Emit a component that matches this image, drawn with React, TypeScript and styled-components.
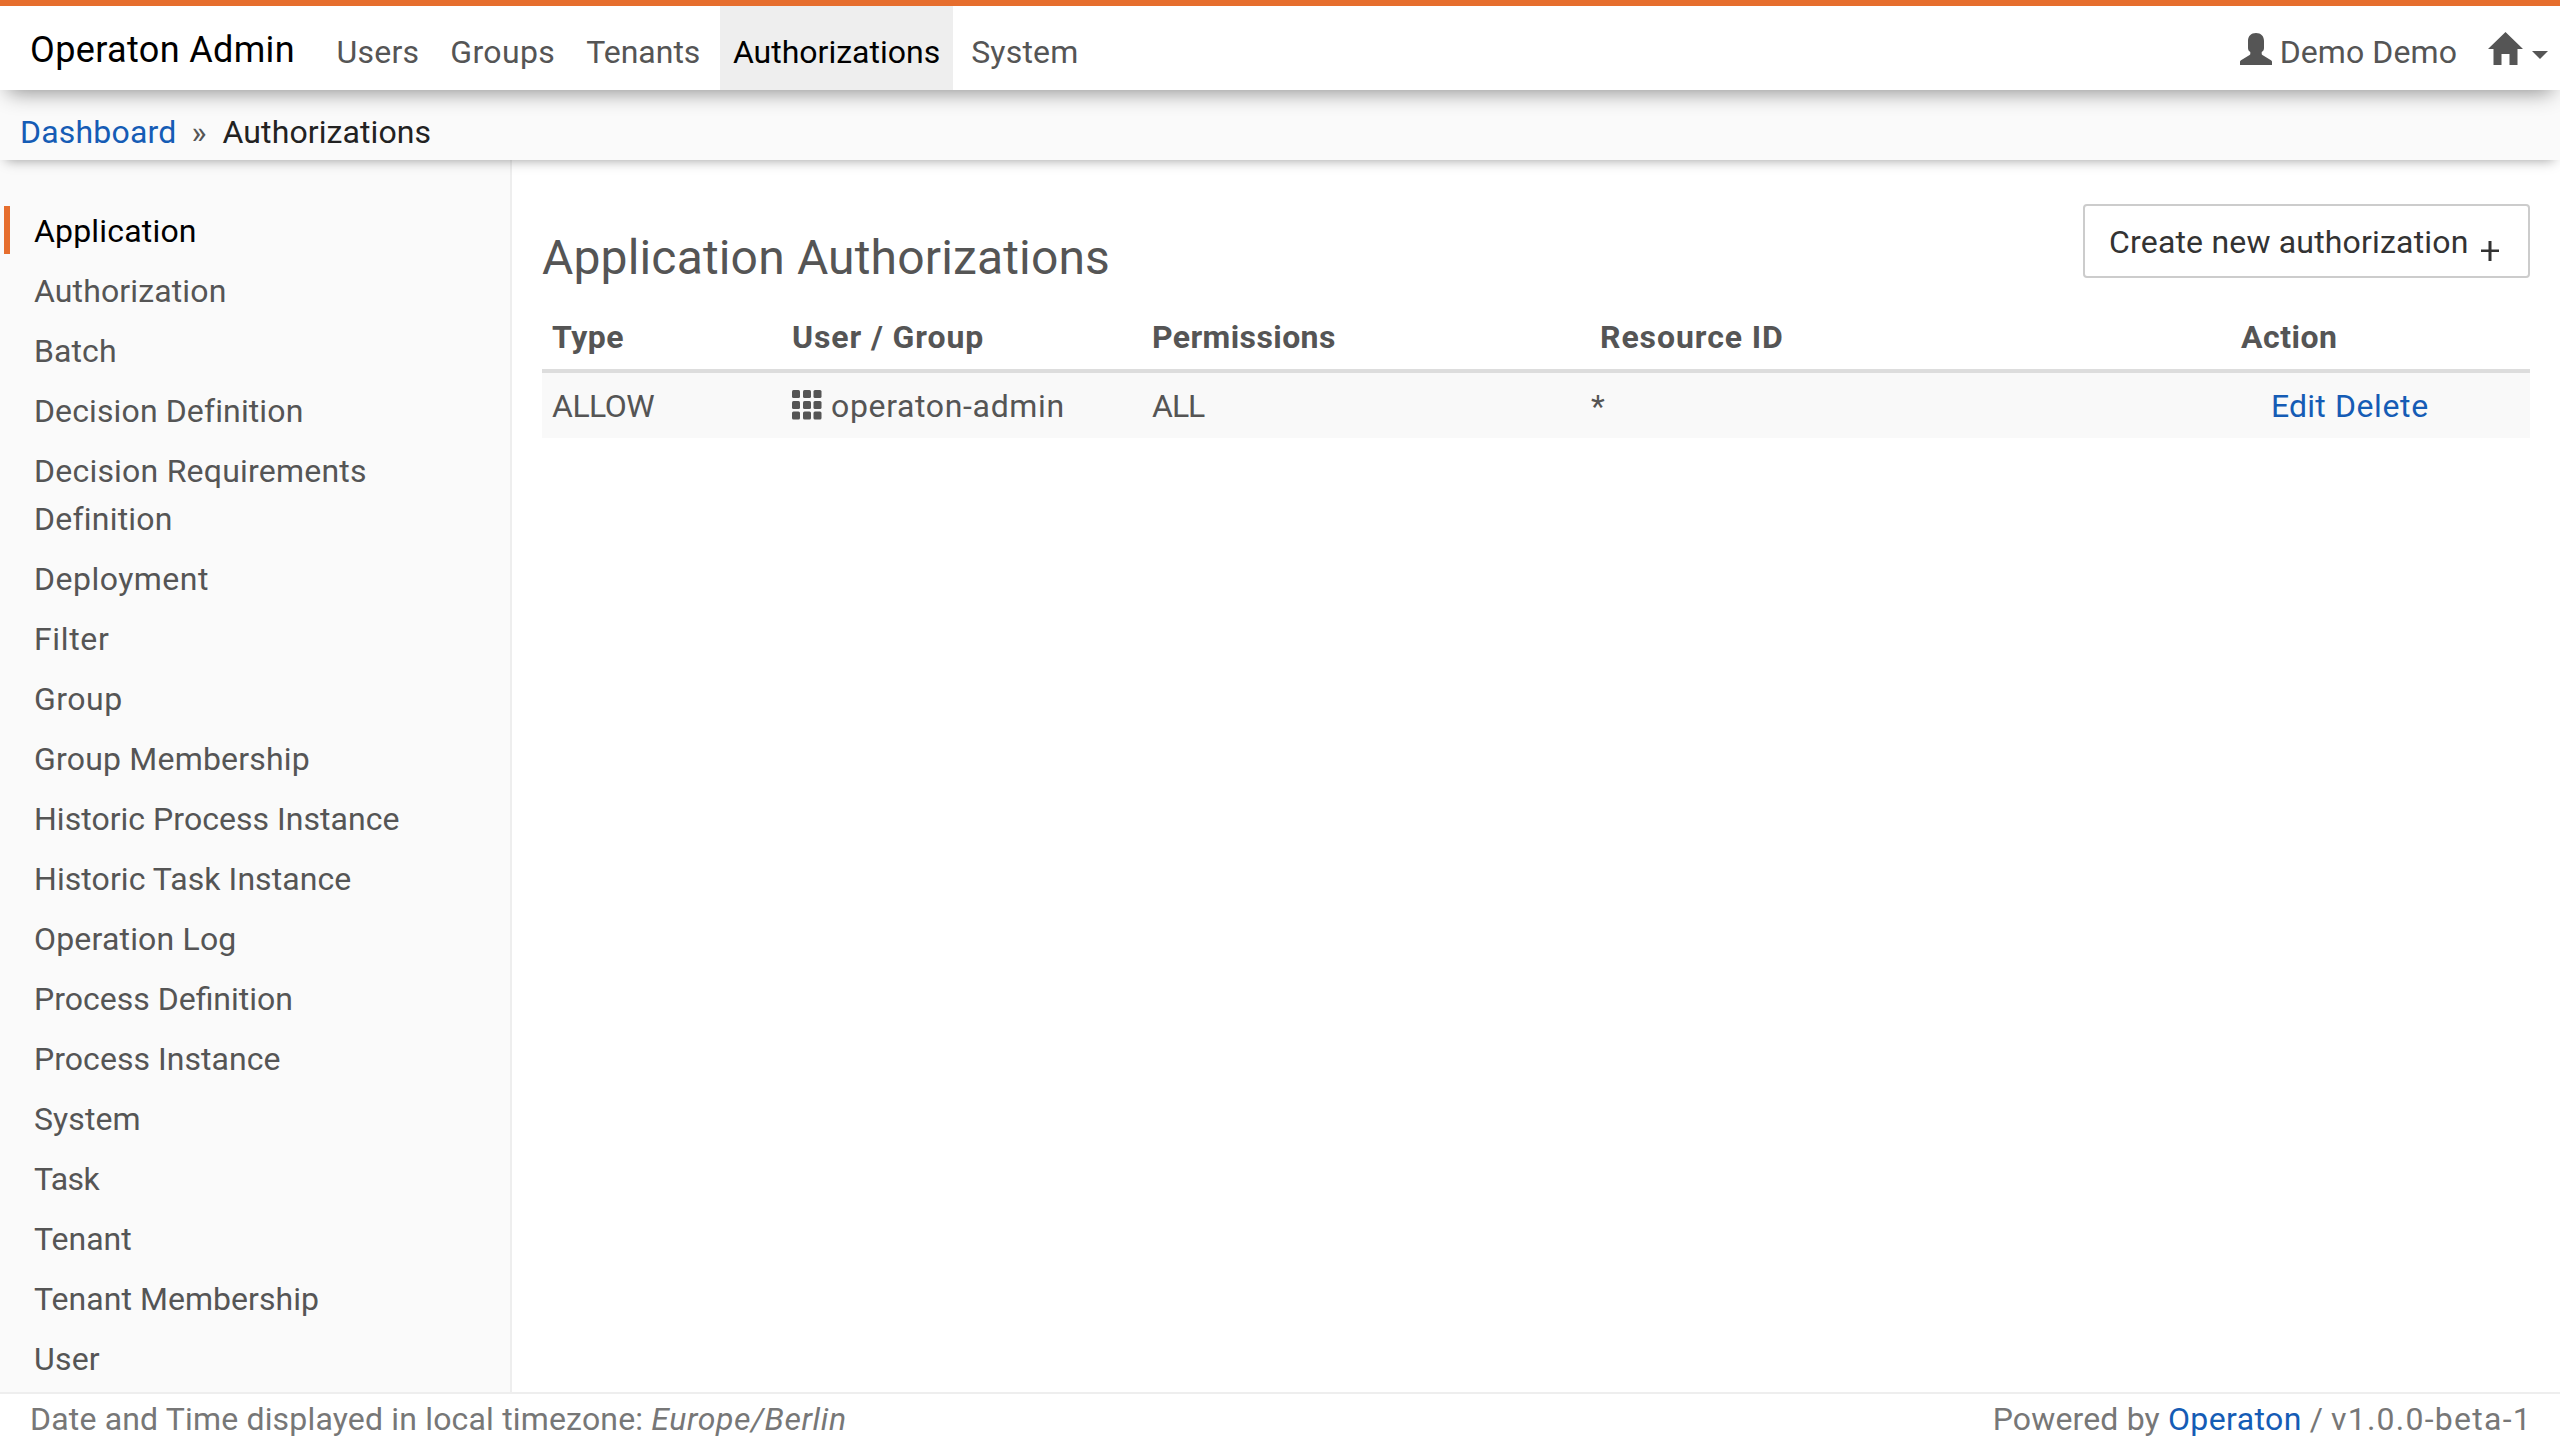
import React from 'react';
import styled, { createGlobalStyle } from 'styled-components';

const Global = createGlobalStyle`
  * { box-sizing: border-box; }
  body {
    margin: 0;
    background: #fff;
    color: #555;
    font: 32px/48px Roboto, "Liberation Sans", sans-serif;
    overflow: hidden;
  }
`;

const Page = styled.div`
  display: flex;
  flex-direction: column;
  width: 2560px;
  height: 1440px;
`;

const Label = styled.span<{ $ls?: number }>`
  letter-spacing: ${(p) => p.$ls ?? 0}px;
  white-space: nowrap;
`;

const Header = styled.header`
  position: relative;
  z-index: 2;
  display: flex;
  flex: none;
  height: 90px;
  border-top: 6px solid #e66e2e;
  background: #fff;
  box-shadow: 0 10px 20px -8px rgba(0, 0, 0, 0.45);
`;

const Brand = styled.div`
  width: 324px;
  padding: 20px 0 0 30px;
  color: #000;
  font-size: 36px;
`;

const Nav = styled.nav`
  display: flex;
  flex: 1;
  gap: 6px;
`;

const NavLink = styled.a<{ $active?: boolean }>`
  margin-left: ${(p) => (p.$active ? 1.5 : 0)}px;
  padding: 22px 12.5px 0 12.5px;
  background: ${(p) => (p.$active ? '#eee' : 'transparent')};
  color: ${(p) => (p.$active ? '#000' : '#555')};
`;

const Account = styled.div`
  display: flex;
  align-items: flex-start;
  padding: 22px 12px 0 0;
`;

const UserIcon = styled.svg`
  width: 32px;
  height: 32px;
  margin: 5px 8px 0 0;
  fill: #555;
`;

const HomeIcon = styled.svg`
  width: 35px;
  height: 33px;
  margin: 4px 9px 0 31px;
  fill: #555;
`;

const Caret = styled.svg`
  width: 16px;
  height: 8px;
  margin-top: 23px;
  fill: #555;
`;

const Breadcrumb = styled.div`
  position: relative;
  z-index: 1;
  display: flex;
  flex: none;
  height: 70px;
  padding: 18px 0 0 20px;
  background: #fafafa;
  color: #222;
  box-shadow: 0 6px 12px -6px rgba(0, 0, 0, 0.4);
`;

const Link = styled.a`
  color: #155cb5;
`;

const Divider = styled.span`
  width: 46px;
  padding-left: 15px;
  color: #555;
`;

const Body = styled.div`
  display: flex;
  flex: 1;
  min-height: 0;
`;

const Sidebar = styled.ul`
  flex: none;
  width: 512px;
  margin: 0;
  padding: 46px 60px 0 4px;
  border-right: 2px solid #eee;
  background: #fafafa;
  list-style: none;
`;

const SideItem = styled.li<{ $active?: boolean }>`
  position: relative;
  padding: 1px 0 11px 30px;
  color: ${(p) => (p.$active ? '#000' : '#555')};

  &::before {
    content: '';
    display: ${(p) => (p.$active ? 'block' : 'none')};
    position: absolute;
    left: 0;
    top: 0;
    width: 6px;
    height: 48px;
    background: #e66e2e;
  }
`;

const SideLabel = styled.span<{ $ls: number }>`
  letter-spacing: ${(p) => p.$ls}px;
`;

const Main = styled.main`
  flex: 1;
  padding: 44px 30px 0;
`;

const TitleRow = styled.div`
  display: flex;
  justify-content: space-between;
  align-items: flex-start;
  height: 109px;
`;

const Title = styled.h1`
  margin: 24px 0 0;
  font-size: 48px;
  font-weight: 400;
  line-height: 60px;
`;

const CreateButton = styled.button`
  display: flex;
  align-items: flex-start;
  width: 447px;
  height: 74px;
  padding: 12px 0 0 24px;
  border: 2px solid #ccc;
  border-radius: 4px;
  background: #fff;
  color: #333;
  font: inherit;
`;

const PlusIcon = styled.svg`
  width: 18px;
  height: 20px;
  margin: 23px 0 0 12px;
  fill: #333;
`;

const Row = styled.div`
  display: grid;
  grid-template-columns: 240px 360px 448px 641px 1fr;
`;

const HeadRow = styled(Row)`
  height: 60px;
  border-bottom: 4px solid #ddd;
  font-weight: 700;
`;

const DataRow = styled(Row)`
  height: 65px;
  padding-top: 9px;
  background: #f9f9f9;
`;

const Cell = styled.div<{ $pad?: number }>`
  display: flex;
  padding-left: ${(p) => p.$pad ?? 10}px;
`;

const GroupIcon = styled.svg`
  width: 30px;
  height: 30px;
  margin: 8px 9px 0 0;
  fill: #555;
`;

const Actions = styled(Cell)`
  gap: 9px;
`;

const Footer = styled.footer`
  display: flex;
  flex: none;
  justify-content: space-between;
  height: 48px;
  padding: 2px 28px 0 30px;
  border-top: 2px solid #eee;
  background: #fff;
  color: #777;
  line-height: 46px;
`;

const FooterText = styled.div`
  display: flex;
  gap: 8px;
`;

const navItems: [string, number][] = [
  ['Users', 0.23],
  ['Groups', 0.36],
  ['Tenants', 0],
  ['Authorizations', 0],
  ['System', 0.2],
];

const resources: [string, number][] = [
  ['Application', 0.18],
  ['Authorization', 0.13],
  ['Batch', 0.1],
  ['Decision Definition', 0.12],
  ['Decision Requirements Definition', 0.22],
  ['Deployment', 0.49],
  ['Filter', 0.66],
  ['Group', 0.5],
  ['Group Membership', 0.2],
  ['Historic Process Instance', 0.03],
  ['Historic Task Instance', 0.07],
  ['Operation Log', 0.18],
  ['Process Definition', 0],
  ['Process Instance', 0.04],
  ['System', 0.1],
  ['Task', -0.6],
  ['Tenant', 0],
  ['Tenant Membership', 0.04],
  ['User', 0.2],
];

const dots = [0, 11, 21.5];

export default function App() {
  return (
    <Page>
      <Global />
      <Header>
        <Brand>
          <Label $ls={0.36}>Operaton Admin</Label>
        </Brand>
        <Nav>
          {navItems.map(([name, ls]) => (
            <NavLink key={name} $active={name === 'Authorizations'}>
              <Label $ls={ls}>{name}</Label>
            </NavLink>
          ))}
        </Nav>
        <Account>
          <UserIcon viewBox="0 0 32 32">
            <path d="M16 0c5 0 8 3.2 8 8v7c0 2-.8 3.3-2.3 4v2c0 .5.2.8.7 1.1L31 27.2c.7.4 1 .8 1 1.5V32H0v-3.3c0-.7.3-1.1 1-1.5l8.6-5.1c.5-.3.7-.6.7-1.1v-2C8.8 18.3 8 17 8 15V8c0-4.8 3-8 8-8z" />
          </UserIcon>
          <Label $ls={0.09}>Demo Demo</Label>
          <HomeIcon viewBox="0 0 35 33">
            <path d="M17.5 0 35 17h-5.5v16h-8V22h-8v11h-8V17H0z" />
          </HomeIcon>
          <Caret viewBox="0 0 16 8">
            <path d="M0 0h16L8 8z" />
          </Caret>
        </Account>
      </Header>
      <Breadcrumb>
        <Link>
          <Label $ls={0.2}>Dashboard</Label>
        </Link>
        <Divider>»</Divider>
        <Label $ls={0.09}>Authorizations</Label>
      </Breadcrumb>
      <Body>
        <Sidebar>
          {resources.map(([name, ls]) => (
            <SideItem key={name} $active={name === 'Application'}>
              <SideLabel $ls={ls}>{name}</SideLabel>
            </SideItem>
          ))}
        </Sidebar>
        <Main>
          <TitleRow>
            <Title>
              <Label $ls={0.16}>Application Authorizations</Label>
            </Title>
            <CreateButton>
              <Label $ls={0.18}>Create new authorization</Label>
              <PlusIcon viewBox="0 0 18 20">
                <path d="M7.5 0h3v8.5H18V11h-7.5v9h-3v-9H0V8.5h7.5z" />
              </PlusIcon>
            </CreateButton>
          </TitleRow>
          <HeadRow>
            <Cell>
              <Label $ls={0.53}>Type</Label>
            </Cell>
            <Cell>
              <Label $ls={0.9}>User / Group</Label>
            </Cell>
            <Cell>
              <Label $ls={0.4}>Permissions</Label>
            </Cell>
            <Cell>
              <Label $ls={0.92}>Resource ID</Label>
            </Cell>
            <Cell>
              <Label $ls={0.5}>Action</Label>
            </Cell>
          </HeadRow>
          <DataRow>
            <Cell>
              <Label $ls={-0.5}>ALLOW</Label>
            </Cell>
            <Cell>
              <GroupIcon viewBox="0 0 30 30">
                {dots.flatMap((y) =>
                  dots.map((x) => <rect key={`${x}-${y}`} x={x} y={y} width="8" height="8" rx="1.5" />),
                )}
              </GroupIcon>
              <Label $ls={0.65}>operaton-admin</Label>
            </Cell>
            <Cell>
              <Label $ls={-1}>ALL</Label>
            </Cell>
            <Cell $pad={1}>
              <Label>*</Label>
            </Cell>
            <Actions $pad={40}>
              <Link>
                <Label $ls={0.19}>Edit</Label>
              </Link>
              <Link>
                <Label $ls={0.6}>Delete</Label>
              </Link>
            </Actions>
          </DataRow>
        </Main>
      </Body>
      <Footer>
        <FooterText>
          <Label $ls={0.17}>Date and Time displayed in local timezone:</Label>
          <Label as="em" $ls={0.6}>
            Europe/Berlin
          </Label>
        </FooterText>
        <FooterText>
          <Label $ls={0.15}>Powered by</Label>
          <Link>
            <Label $ls={0.4}>Operaton</Label>
          </Link>
          <Label>/</Label>
          <Label $ls={1.25}>v1.0.0-beta-1</Label>
        </FooterText>
      </Footer>
    </Page>
  );
}
